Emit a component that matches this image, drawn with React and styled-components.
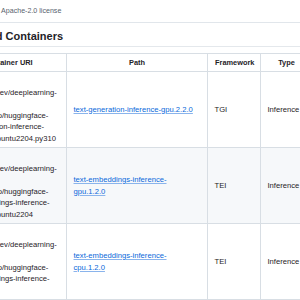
import React from "react";
import styled, { createGlobalStyle } from "styled-components";
import { GoBook, GoLaw } from "react-icons/go";

const GlobalStyle = createGlobalStyle`
  html, body { margin: 0; padding: 0; background: #ffffff; }
  body {
    font-family: "Liberation Sans", Arial, Helvetica, sans-serif;
    color: #1f2328;
    overflow: hidden;
  }
`;

const Viewport = styled.div`
  width: 300px;
  height: 300px;
  overflow: hidden;
`;

const ReadmeBox = styled.div`
  width: 450px;
  margin-left: -70px;
`;

const TabBar = styled.div`
  display: flex;
  align-items: center;
  gap: 0;
  height: 22px;
  padding-left: 2px;
  border-bottom: 1px solid #e1e6eb;
`;

const Tab = styled.div`
  display: flex;
  align-items: center;
  gap: 4.4px;
  height: 100%;
  padding: 0 4px;
  font-size: 7.1px;
  color: ${(p) => (p.$active ? "#1f2328" : "#59636e")};
  font-weight: ${(p) => (p.$active ? 600 : 400)};
  box-shadow: ${(p) => (p.$active ? "inset 0 -1.5px 0 #fd8c73" : "none")};
  svg { width: 8.75px; height: 8.75px; flex: none; }
`;

const Article = styled.article`
  padding-left: 20px;
`;

const Heading = styled.h2`
  margin: 6px 0 0;
  font-size: 11px;
  font-weight: 700;
  line-height: 14px;
  padding-bottom: 3px;
  border-bottom: 1px solid #e4e8ec;
`;

const Table = styled.table`
  margin-top: 5.5px;
  margin-left: -1px;
  border-collapse: collapse;
  table-layout: fixed;
  width: 415px;
  font-size: 7.65px;
  line-height: 11.5px;
`;

const Row = styled.tr`
  background: ${(p) => (p.$alt ? "#f6f8fa" : "#ffffff")};
`;

const Th = styled.th`
  box-sizing: border-box;
  width: ${(p) => p.$w}px;
  padding: 3px 7px;
  border: 1px solid #d8dee4;
  font-weight: 700;
  font-size: 7.4px;
  text-align: center;
`;

const Td = styled.td`
  padding: 3px 6.5px;
  border: 1px solid #d8dee4;
  vertical-align: middle;
  text-align: left;
`;

const Link = styled.a`
  color: #0969da;
  text-decoration: underline;
  text-decoration-color: #8ab4ec;
  text-underline-offset: 1px;
`;

const columns = [
  { label: "Container URI", w: 117 },
  { label: "Path", w: 141 },
  { label: "Framework", w: 53 },
  { label: "Type", w: 52 },
  { label: "Accelerator", w: 52 },
];

const rows = [
  {
    uri: [
      "us-",
      "docker.pkg.dev/deeplearning-",
      "platform-",
      "release/gcr.io/huggingface-",
      "text-generation-inference-",
      "cu121.2-2.ubuntu2204.py310",
    ],
    path: ["text-generation-inference-gpu.2.2.0"],
    fw: "TGI",
    type: "Inference",
    acc: "GPU",
  },
  {
    uri: [
      "us-",
      "docker.pkg.dev/deeplearning-",
      "platform-",
      "release/gcr.io/huggingface-",
      "text-embeddings-inference-",
      "cu122.1-2.ubuntu2204",
    ],
    path: ["text-embeddings-inference-", "gpu.1.2.0"],
    fw: "TEI",
    type: "Inference",
    acc: "GPU",
  },
  {
    uri: [
      "us-",
      "docker.pkg.dev/deeplearning-",
      "platform-",
      "release/gcr.io/huggingface-",
      "text-embeddings-inference-",
      "cpu.1-2",
    ],
    path: ["text-embeddings-inference-", "cpu.1.2.0"],
    fw: "TEI",
    type: "Inference",
    acc: "CPU",
  },
];

const Lines = ({ parts }) =>
  parts.map((p, i) => (
    <React.Fragment key={i}>
      {i > 0 && <br />}
      {p}
    </React.Fragment>
  ));

export default function App() {
  return (
    <>
      <GlobalStyle />
      <Viewport>
        <ReadmeBox>
          <TabBar>
            <Tab $active>
              <GoBook />
              README
            </Tab>
            <Tab>
              <GoLaw />
              Apache-2.0 license
            </Tab>
          </TabBar>
          <Article>
            <Heading>Published Containers</Heading>
            <Table>
              <thead>
                <Row>
                  {columns.map((c) => (
                    <Th key={c.label} $w={c.w}>
                      {c.label}
                    </Th>
                  ))}
                </Row>
              </thead>
              <tbody>
                {rows.map((r, i) => (
                  <Row key={i} $alt={i % 2 === 1}>
                    <Td>
                      <Lines parts={r.uri} />
                    </Td>
                    <Td>
                      <Link href="#">
                        <Lines parts={r.path} />
                      </Link>
                    </Td>
                    <Td>{r.fw}</Td>
                    <Td>{r.type}</Td>
                    <Td>{r.acc}</Td>
                  </Row>
                ))}
              </tbody>
            </Table>
          </Article>
        </ReadmeBox>
      </Viewport>
    </>
  );
}
